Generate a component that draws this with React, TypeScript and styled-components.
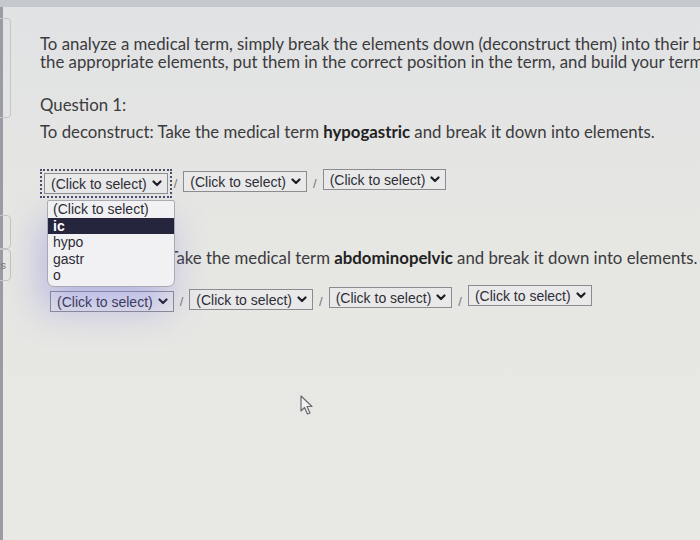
import React from "react"
import styled, { createGlobalStyle } from "styled-components"

const GlobalStyle = createGlobalStyle`
  html, body {
    margin: 0;
    padding: 0;
    width: 700px;
    height: 540px;
    overflow: hidden;
  }
  body {
    background: #e4e4e2;
  }
`

const Screen = styled.div`
  position: relative;
  width: 700px;
  height: 540px;
  overflow: hidden;
  display: flex;
  background: linear-gradient(180deg, #e1e2e4 0%, #e6e6e3 40%, #e8e8e5 100%);
  border-top: 7px solid #c6c8d0;
  box-sizing: border-box;
  font-family: Lato, "Open Sans", sans-serif;
  color: #3b3b3d;
`

const SideStrip = styled.div`
  width: 14px;
  flex: none;
  border-left: 3px solid #9a9ca4;
  box-sizing: border-box;
  display: flex;
  flex-direction: column;
`

const SideBox = styled.div<{ $top: number; $height: number }>`
  margin-top: ${props => props.$top}px;
  margin-left: -14px;
  width: 22px;
  height: ${props => props.$height}px;
  border: 1px solid #c4c4c6;
  border-radius: 4px;
  box-sizing: border-box;
  font-family: "Liberation Sans", Arial, sans-serif;
  font-size: 11px;
  color: #777;
  display: flex;
  align-items: center;
  justify-content: flex-end;
  padding-right: 4px;
`

const Content = styled.div`
  flex: 1;
  padding: 28px 0 0 26px;
  min-width: 0;
`

const Intro = styled.p`
  margin: 0;
  font-size: 16.8px;
  line-height: 18px;
  white-space: nowrap;
`

const Label = styled.p<{ $gap: number; $indent?: number }>`
  margin: ${props => props.$gap}px 0 0 ${props => props.$indent || 0}px;
  font-size: 16.8px;
  line-height: 18px;
  white-space: nowrap;
`

const Term = styled.b`
  font-weight: 700;
  color: #222;
`

const SelectRow = styled.div<{ $gap: number; $indent: number }>`
  display: flex;
  align-items: center;
  gap: 6px;
  margin: ${props => props.$gap}px 0 0 ${props => props.$indent}px;
  position: relative;
`

const Slash = styled.span`
  font-family: "Liberation Sans", Arial, sans-serif;
  font-size: 13px;
  color: #777;
`

const SelectBox = styled.div<{ $focused?: boolean; $lift?: number }>`
  display: flex;
  align-items: center;
  gap: 5px;
  height: 21px;
  padding: 0 5px 0 6px;
  border: 1px solid #8c8c90;
  box-sizing: border-box;
  background: #e9e9e9;
  font-family: "Liberation Sans", Arial, sans-serif;
  font-size: 14px;
  color: #2e2e36;
  transform: translateY(${props => -(props.$lift || 0)}px);
  outline: ${props => (props.$focused ? "2px dotted #4a4e6a" : "none")};
  outline-offset: 2px;
`

const Chevron = () => (
  <svg width="10" height="7" viewBox="0 0 10 7">
    <path d="M1.5 1.5 L5 5 L8.5 1.5" fill="none" stroke="#1e1e26" strokeWidth="2.2" strokeLinecap="round" strokeLinejoin="round" />
  </svg>
)

const Dropdown = styled.ul`
  position: absolute;
  left: 3px;
  top: 27px;
  width: 126px;
  margin: 0;
  padding: 0 0 2px 0;
  list-style: none;
  background: #f1f1f3;
  border: 1px solid #a9a9b0;
  border-radius: 2px 2px 7px 7px;
  box-shadow: -6px 22px 36px rgba(110, 110, 225, 0.38);
  font-family: "Liberation Sans", Arial, sans-serif;
  font-size: 14px;
  color: #2c2c34;
  z-index: 5;
`

const Option = styled.li<{ $active?: boolean }>`
  height: 16.5px;
  line-height: 16.5px;
  padding-left: 5px;
  background: ${props => (props.$active ? "#25253e" : "transparent")};
  color: ${props => (props.$active ? "#ffffff" : "#2c2c34")};
  font-weight: ${props => (props.$active ? 700 : 400)};
`

const Cursor = styled.svg`
  position: absolute;
  left: 300px;
  top: 388px;
`

const Select = ({ focused, lift }: { focused?: boolean; lift?: number }) => (
  <SelectBox $focused={focused} $lift={lift}>
    (Click to select) <Chevron />
  </SelectBox>
)

const App: React.FC = () => {
  return (
    <>
      <GlobalStyle />
      <Screen>
        <SideStrip>
          <SideBox $top={11} $height={100} />
          <SideBox $top={97} $height={34} />
          <SideBox $top={0} $height={32}>s</SideBox>
        </SideStrip>
        <Content>
          <Intro>
            To analyze a medical term, simply break the elements down (deconstruct them) into their basic elements.
            <br />
            the appropriate elements, put them in the correct position in the term, and build your term.
          </Intro>
          <Label $gap={25}>Question 1:</Label>
          <Label $gap={9}>
            To deconstruct: Take the medical term <Term>hypogastric</Term> and break it down into elements.
          </Label>
          <SelectRow $gap={32} $indent={4}>
            <Select focused />
            <Slash>/</Slash>
            <Select lift={2} />
            <Slash>/</Slash>
            <Select lift={4} />
            <Dropdown>
              <Option>(Click to select)</Option>
              <Option $active>ic</Option>
              <Option>hypo</Option>
              <Option>gastr</Option>
              <Option>o</Option>
            </Dropdown>
          </SelectRow>
          <Label $gap={55} $indent={11}>
            To deconstruct: Take the medical term <Term>abdominopelvic</Term> and break it down into elements.
          </Label>
          <SelectRow $gap={24} $indent={10}>
            <Select />
            <Slash>/</Slash>
            <Select lift={2} />
            <Slash>/</Slash>
            <Select lift={4} />
            <Slash>/</Slash>
            <Select lift={6} />
          </SelectRow>
        </Content>
        <Cursor width="16" height="22" viewBox="0 0 16 22">
          <path d="M1 1 L1 16 L4.5 12.5 L7.5 19 L10 18 L7 11.5 L12 11.5 Z" fill="#f2f2f2" stroke="#6a6a70" strokeWidth="1.2" strokeLinejoin="round" />
        </Cursor>
      </Screen>
    </>
  )
}

export default App
